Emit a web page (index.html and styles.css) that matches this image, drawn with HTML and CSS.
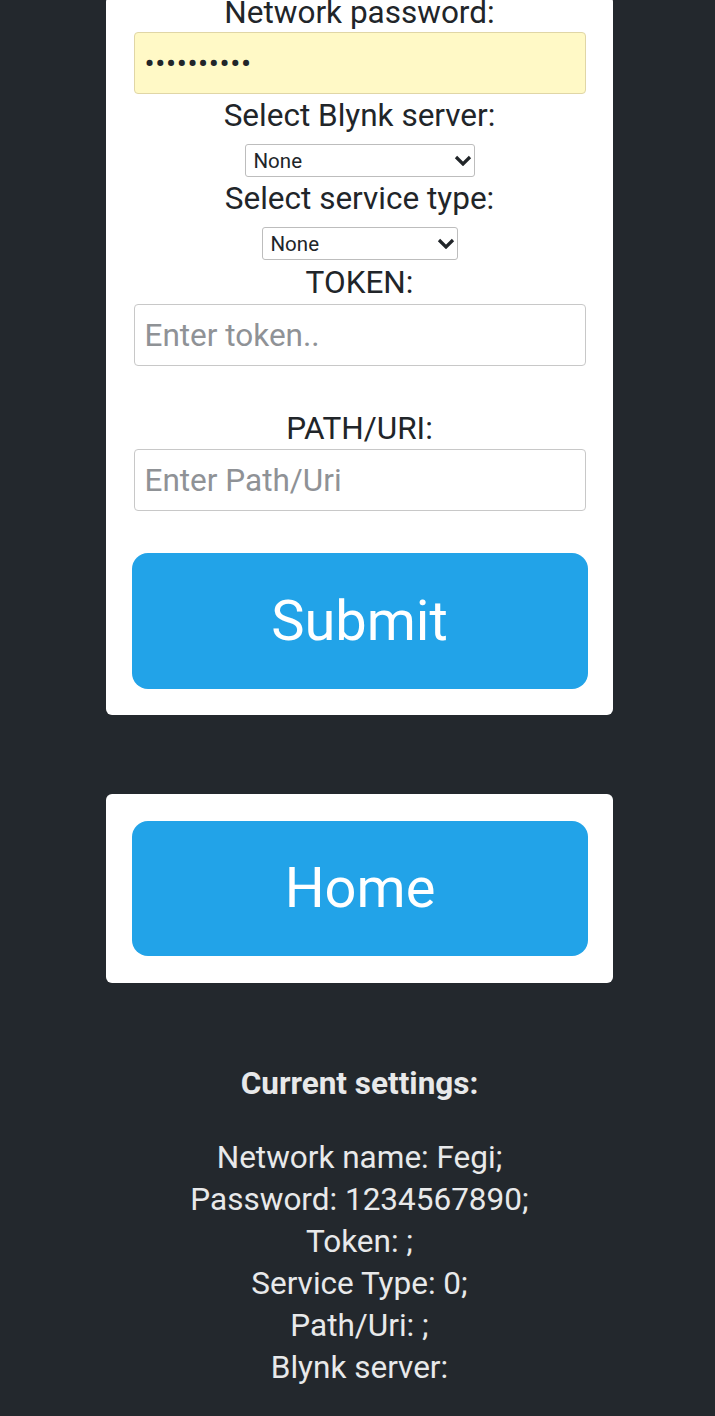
FILE: index.html
```html
<!DOCTYPE html>
<html lang="en">
<head>
    <meta charset="UTF-8">
    <meta name="viewport" content="width=device-width, initial-scale=1.0">
    <title>Settings</title>
    <link rel="stylesheet" href="styles.css">
</head>
<body>
    <div class="page">
        <form class="card settings-form" id="settingsForm">
            <label class="label-first" for="pass">Network password:</label>
            <input class="field field-pass" type="password" id="pass" name="pass" value="1234567890">

            <label class="label-tight" for="server">Select Blynk server:</label>
            <div class="select-wrap select-server">
                <select id="server" name="server">
                    <option>None</option>
                    <option>blynk-cloud.com</option>
                </select>
                <svg class="chevron" viewBox="0 0 18 11" width="18" height="11"><path d="M2 2 L9 9 L16 2" fill="none" stroke="#212529" stroke-width="3.2"/></svg>
            </div>

            <label class="label-tight" for="service">Select service type:</label>
            <div class="select-wrap select-service">
                <select id="service" name="service">
                    <option>None</option>
                    <option>Blynk</option>
                </select>
                <svg class="chevron" viewBox="0 0 18 11" width="18" height="11"><path d="M2 2 L9 9 L16 2" fill="none" stroke="#212529" stroke-width="3.2"/></svg>
            </div>

            <label class="label-token" for="token">TOKEN:</label>
            <input class="field" type="text" id="token" name="token" placeholder="Enter token..">

            <label class="label-gap" for="path">PATH/URI:</label>
            <input class="field" type="text" id="path" name="path" placeholder="Enter Path/Uri">

            <button type="submit" class="btn btn-submit">Submit</button>
        </form>

        <div class="card home-card">
            <a href="/" class="btn">Home</a>
        </div>

        <div class="current">
            <h3>Current settings:</h3>
            <p>Network name: Fegi;</p>
            <p>Password: 1234567890;</p>
            <p>Token: ;</p>
            <p>Service Type: 0;</p>
            <p>Path/Uri: ;</p>
            <p>Blynk server:</p>
        </div>
    </div>
</body>
</html>
```

FILE: styles.css
```css
body {
    font-family: Roboto, "Noto Sans", Arial, sans-serif;
    margin: 0;
    padding: 0;
    background-color: #23282d;
    color: #212529;
}
.page {
    padding: 0 102px 40px 106px;
}
.card {
    background-color: white;
    border-radius: 6px;
    padding: 0 26px;
}
.settings-form {
    display: flex;
    flex-direction: column;
    align-items: center;
    margin-top: -4px;
    padding-bottom: 26px;
}
label {
    display: block;
    font-size: 31.5px;
    line-height: 34px;
    text-align: center;
}
.label-first {
    margin-bottom: 2px;
}
.label-tight {
    margin-top: 5px;
    margin-bottom: 11px;
}
.label-token {
    margin-top: 6px;
    margin-bottom: 4px;
}
.label-gap {
    margin-top: 46px;
    margin-bottom: 3px;
}
.field {
    box-sizing: border-box;
    width: 452px;
    height: 62px;
    padding: 0 10px;
    font-family: Roboto, "Noto Sans", Arial, sans-serif;
    font-size: 31.5px;
    color: #212529;
    border: 1px solid #c8c8c8;
    border-radius: 4px;
    background-color: white;
}
.field::placeholder {
    color: #8f9296;
}
.field-pass {
    background-color: #fff9c6;
    border-color: #e0d6a6;
    font-size: 30px;
    letter-spacing: 0.6px;
}
.select-wrap {
    position: relative;
}
.select-wrap select {
    box-sizing: border-box;
    height: 33px;
    padding: 0 26px 0 8px;
    font-family: Roboto, "Noto Sans", Arial, sans-serif;
    font-size: 20.5px;
    color: #212529;
    background-color: white;
    border: 1px solid #bdbdbd;
    border-radius: 3px;
    appearance: none;
    -webkit-appearance: none;
}
.select-server select {
    width: 230px;
}
.select-service select {
    width: 196px;
}
.chevron {
    position: absolute;
    right: 3px;
    top: 11px;
    pointer-events: none;
}
.btn {
    display: block;
    box-sizing: border-box;
    width: 456px;
    height: 136px;
    line-height: 136px;
    font-family: Roboto, "Noto Sans", Arial, sans-serif;
    font-size: 56px;
    text-align: center;
    text-decoration: none;
    color: white;
    background-color: #22a3e8;
    border: none;
    border-radius: 16px;
    padding: 0;
    cursor: pointer;
}
.btn-submit {
    margin-top: 42px;
}
.home-card {
    margin-top: 79px;
    padding-top: 27px;
    padding-bottom: 27px;
}
.home-card .btn {
    height: 135px;
    line-height: 135px;
}
.current {
    margin-top: 80px;
    text-align: center;
    color: #e8e9ea;
    font-size: 31.5px;
    line-height: 42px;
}
.current h3 {
    font-size: 31.5px;
    font-weight: bold;
    margin: 0 0 32px 0;
}
.current p {
    margin: 0;
}
```
